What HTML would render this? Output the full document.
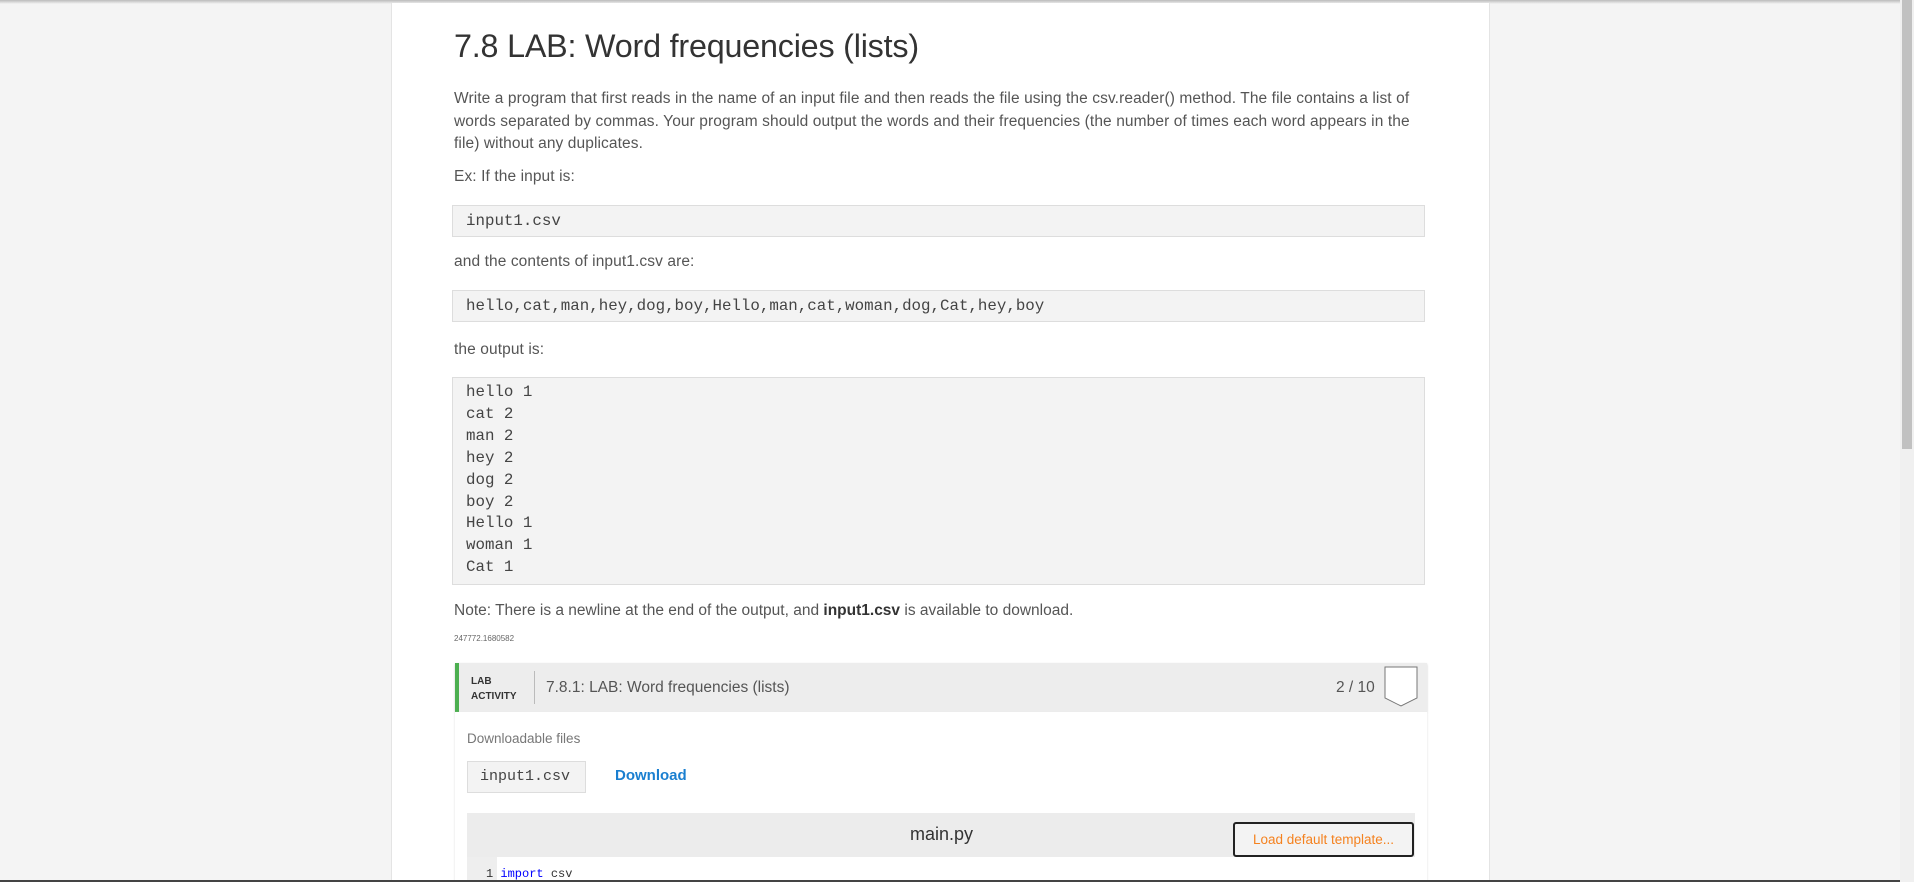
<!DOCTYPE html>
<html><head><style>
*{margin:0;padding:0;box-sizing:border-box}
body{width:1914px;height:882px;background:#f4f4f4;font-family:"Liberation Sans",sans-serif;position:relative;overflow:hidden;color:#555}
.top{position:absolute;left:0;top:0;width:1914px;height:4px;background:linear-gradient(#bbb,#f4f4f4)}
.col{position:absolute;left:391px;top:3px;width:1099px;height:879px;background:#fff;border-left:1px solid #e4e4e4;border-right:1px solid #e4e4e4}
.a{position:absolute;white-space:nowrap}
h1{position:absolute;left:454px;top:28px;font-size:32.3px;font-weight:normal;color:#333;letter-spacing:-0.2px}
.p{position:absolute;left:454px;font-size:15.5px;line-height:22.5px;color:#555;letter-spacing:0.1px}
.box{position:absolute;left:452px;width:973px;background:#f3f3f3;border:1px solid #ddd;font-family:"Liberation Mono",monospace;font-size:15.8px;color:#444;padding-left:13px}
.sb{position:absolute;right:0;top:0;width:14px;height:882px;background:#f0f0f0}
.th{position:absolute;right:2px;top:0;width:10px;height:449px;background:#c1c1c1}
</style></head><body>
<div class="top"></div>
<div class="col"></div>
<h1>7.8 LAB: Word frequencies (lists)</h1>
<div class="p" style="top:88px;width:975px">Write a program that first reads in the name of an input file and then reads the file using the csv.reader() method. The file contains a list of words separated by commas. Your program should output the words and their frequencies (the number of times each word appears in the file) without any duplicates.</div>
<div class="p" style="top:166px">Ex: If the input is:</div>
<div class="box" style="top:205px;height:32px;line-height:30px">input1.csv</div>
<div class="p" style="top:251px">and the contents of input1.csv are:</div>
<div class="box" style="top:290px;height:32px;line-height:30px">hello,cat,man,hey,dog,boy,Hello,man,cat,woman,dog,Cat,hey,boy</div>
<div class="p" style="top:339px">the output is:</div>
<div class="box" style="top:377px;height:208px;line-height:21.9px;padding-top:4px">hello 1<br>cat 2<br>man 2<br>hey 2<br>dog 2<br>boy 2<br>Hello 1<br>woman 1<br>Cat 1</div>
<div class="p" style="top:600px;letter-spacing:0">Note: There is a newline at the end of the output, and <b style="color:#333;font-weight:600">input1.csv</b> is available to download.</div>
<div class="a" style="left:454px;top:634px;font-size:8px;color:#666">247772.1680582</div>
<div class="a" style="left:455px;top:663px;width:972px;height:49px;background:#ededed;border-left:4px solid #4caf50;box-shadow:0 1px 2px #ccc"></div>
<div class="a" style="left:471px;top:674px;font-size:10px;font-weight:bold;color:#333;line-height:15px">LAB<br>ACTIVITY</div>
<div class="a" style="left:534px;top:671px;width:1px;height:33px;background:#bbb"></div>
<div class="a" style="left:546px;top:679px;font-size:15.5px;color:#555">7.8.1: LAB: Word frequencies (lists)</div>
<div class="a" style="left:1336px;top:679px;font-size:15.5px;color:#555">2 / 10</div>
<svg class="a" style="left:1384px;top:666px" width="34" height="42"><path d="M1 1H33V32L17 40L1 32Z" fill="#fff" stroke="#777" stroke-width="1"/></svg>
<div class="a" style="left:455px;top:712px;width:972px;height:170px;background:#fff;box-shadow:0 1px 2px #ddd"></div>
<div class="a" style="left:467px;top:731px;font-size:13.5px;color:#777">Downloadable files</div>
<div class="a" style="left:467px;top:761px;width:119px;height:32px;background:#f3f3f3;border:1px solid #ddd;font-family:'Liberation Mono',monospace;font-size:15px;line-height:30px;padding-left:12px;color:#444">input1.csv</div>
<div class="a" style="left:615px;top:767px;font-size:15px;font-weight:bold;color:#1a7fd0">Download</div>
<div class="a" style="left:467px;top:813px;width:948px;height:44px;background:#ececec"></div>
<div class="a" style="left:910px;top:824px;font-size:18px;color:#333">main.py</div>
<div class="a" style="left:1233px;top:822px;width:181px;height:35px;border:2px solid #222;border-radius:3px;background:#f3f3f3;font-size:13.5px;color:#f5821f;text-align:center;line-height:31px">Load default template...</div>
<div class="a" style="left:467px;top:857px;width:948px;height:25px;background:#fff"></div>
<div class="a" style="left:467px;top:857px;width:30px;height:25px;background:#eee"></div>
<div class="a" style="left:486px;top:867px;font-family:'Liberation Mono',monospace;font-size:12px;color:#333">1 <span style="color:#00f">import</span> csv</div>
<div class="a" style="left:0;top:880px;width:1914px;height:2px;background:#444"></div>
<div class="sb"><div class="th"></div></div>
</body></html>
